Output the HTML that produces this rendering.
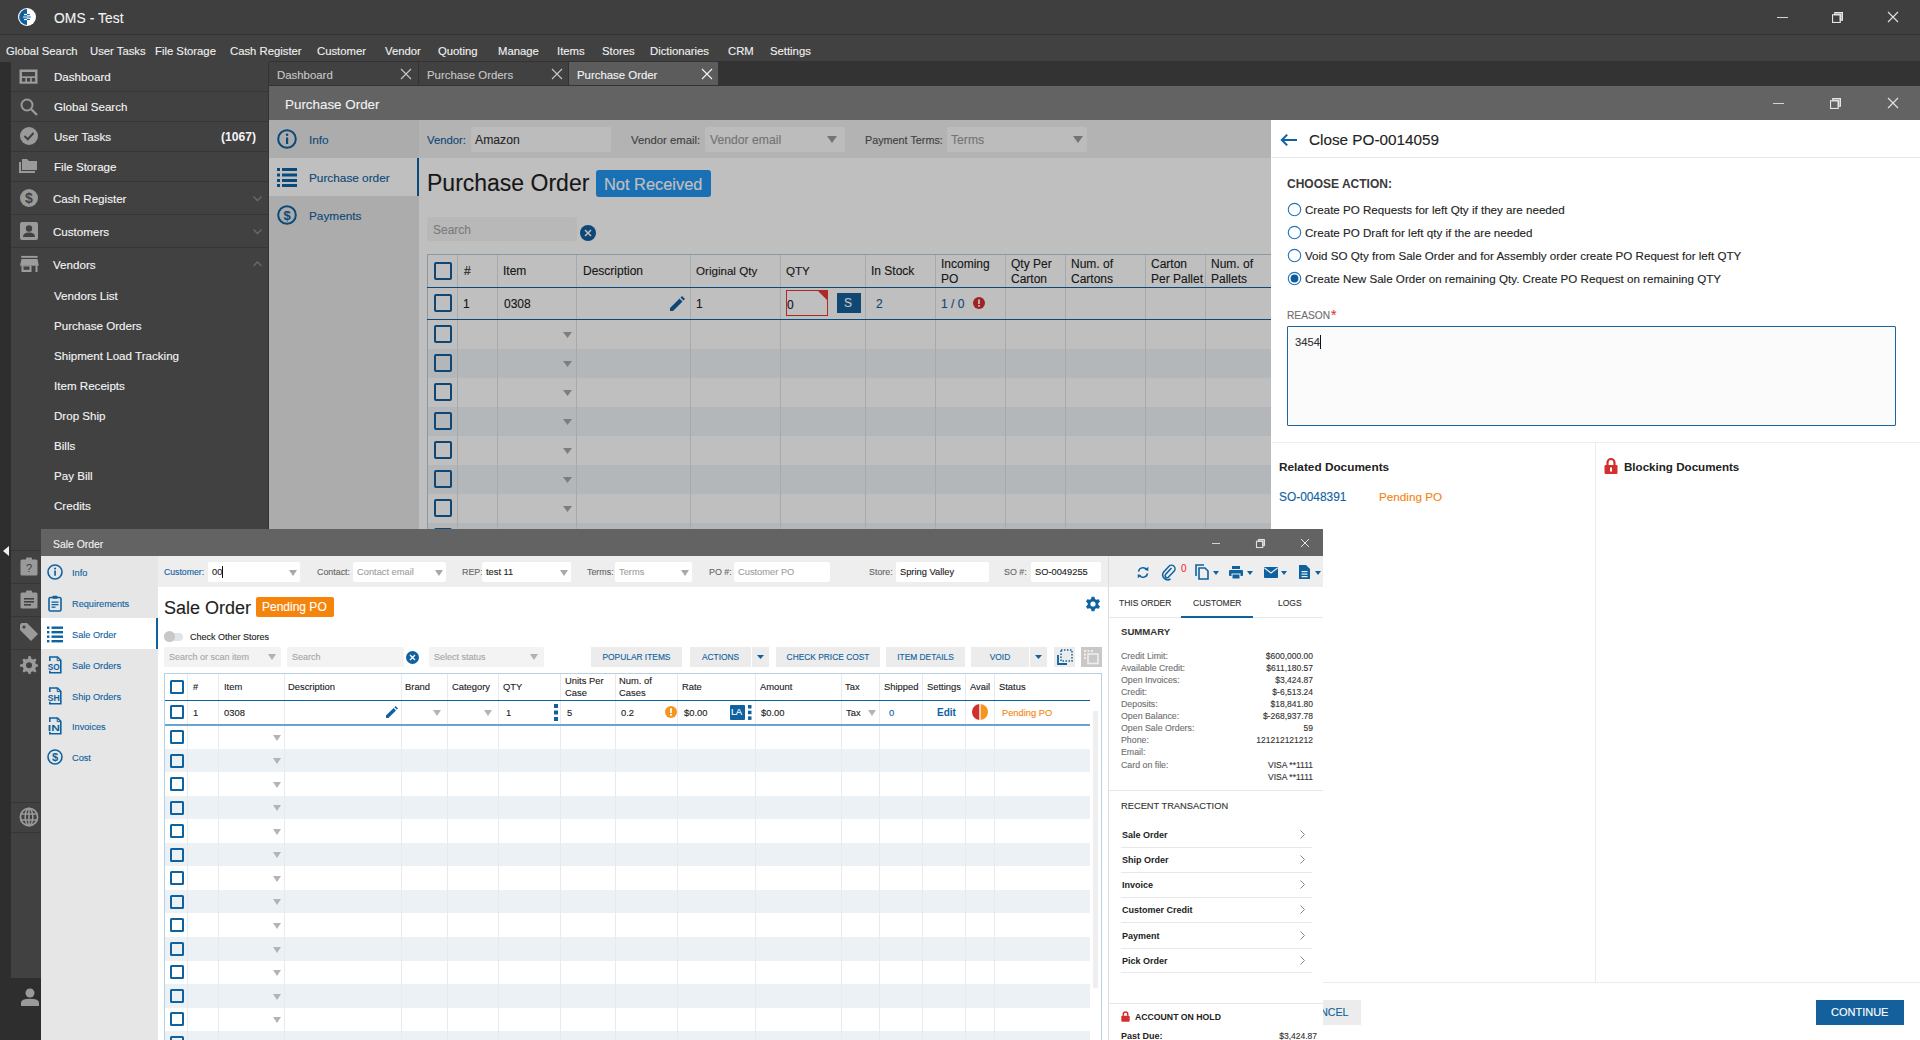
<!DOCTYPE html>
<html><head><meta charset="utf-8">
<style>
*{box-sizing:border-box;margin:0;padding:0}
html,body{width:1920px;height:1040px;overflow:hidden;background:#414141;font-family:"Liberation Sans",sans-serif}
.a{position:absolute}
.t{position:absolute;white-space:nowrap;line-height:16px;height:16px;-webkit-text-stroke:0.12px currentColor}
svg{position:absolute;overflow:visible}
.t[style*="bold"]{-webkit-text-stroke:0}
</style></head><body>

<!-- ===== APP TITLE BAR ===== -->
<div class="a" style="left:0;top:0;width:1920px;height:34px;background:#3f3f3f"></div>
<div class="a" style="left:0;top:34px;width:1920px;height:1px;background:#343434"></div>
<svg style="left:17px;top:7px" width="20" height="20" viewBox="0 0 20 20">
  <circle cx="10" cy="10" r="9" fill="#ffffff"/>
  <path d="M10 2.1 A7.9 7.9 0 0 0 10 17.9 Z" fill="#0e5f9e"/>
  <rect x="7" y="6.9" width="3" height="1.3" fill="#ffffff"/><rect x="10" y="6.9" width="3" height="1.3" rx="0.6" fill="#0e5f9e"/>
  <rect x="6" y="9.3" width="4" height="1.5" fill="#a9c8e2"/><rect x="10" y="9.3" width="4" height="1.5" rx="0.7" fill="#5b95c5"/>
  <rect x="7" y="11.8" width="3" height="1.3" fill="#ffffff"/><rect x="10" y="11.8" width="3" height="1.3" rx="0.6" fill="#0e5f9e"/>
</svg>
<div class="t" style="left:54px;top:11px;font-size:13.8px;color:#f2f2f2;letter-spacing:0.1px">OMS - Test</div>
<!-- window controls -->
<div class="a" style="left:1777px;top:16.5px;width:11px;height:1.3px;background:#d4d4d4"></div>
<svg style="left:1832px;top:12px" width="11" height="11" viewBox="0 0 10 10"><path d="M2.5 2.5 L2.5 0.5 L9.5 0.5 L9.5 7.5 L7.5 7.5 L7.5 2.5 Z" fill="#a9a9a9" stroke="#e6e6e6" stroke-width="1"/><rect x="0.5" y="2.5" width="7" height="7" fill="none" stroke="#e6e6e6" stroke-width="1"/></svg>
<svg style="left:1887.5px;top:12px" width="10" height="10"><path d="M0 0 L10 10 M10 0 L0 10" stroke="#e4e4e4" stroke-width="1.1"/></svg>

<!-- ===== MENU BAR ===== -->
<div class="a" style="left:0;top:35px;width:1920px;height:27px;background:#414141"></div>
<div style="position:absolute;left:0;top:42.5px;font-size:11.3px;color:#f0f0f0;line-height:16px;white-space:nowrap">
<span class="t" style="left:6px">Global Search</span>
<span class="t" style="left:90px">User Tasks</span>
<span class="t" style="left:155px">File Storage</span>
<span class="t" style="left:230px">Cash Register</span>
<span class="t" style="left:317px">Customer</span>
<span class="t" style="left:385px">Vendor</span>
<span class="t" style="left:438px">Quoting</span>
<span class="t" style="left:498px">Manage</span>
<span class="t" style="left:557px">Items</span>
<span class="t" style="left:602px">Stores</span>
<span class="t" style="left:650px">Dictionaries</span>
<span class="t" style="left:728px">CRM</span>
<span class="t" style="left:770px">Settings</span>
</div>

<!-- ===== SIDEBAR ===== -->
<div class="a" style="left:0;top:62px;width:11px;height:978px;background:#2e2e2e"></div>
<div class="a" style="left:11px;top:62px;width:258px;height:978px;background:#414141"></div>
<div class="a" style="left:268px;top:62px;width:1px;height:470px;background:#333"></div>
<!-- row separators -->
<div class="a" style="left:11px;top:91px;width:257px;height:1px;background:#363636"></div>
<div class="a" style="left:11px;top:121px;width:257px;height:1px;background:#363636"></div>
<div class="a" style="left:11px;top:151px;width:257px;height:1px;background:#363636"></div>
<div class="a" style="left:11px;top:181px;width:257px;height:1px;background:#363636"></div>
<div class="a" style="left:11px;top:214px;width:257px;height:1px;background:#363636"></div>
<div class="a" style="left:11px;top:247px;width:257px;height:1px;background:#363636"></div>
<div style="position:absolute;left:0;top:0.5px;font-size:11.6px;color:#f4f4f4">
<span class="t" style="left:54px;top:68px">Dashboard</span>
<span class="t" style="left:54px;top:98px">Global Search</span>
<span class="t" style="left:54px;top:128px">User Tasks</span>
<span class="t" style="left:221px;top:128px;font-weight:bold;font-size:12.1px">(1067)</span>
<span class="t" style="left:54px;top:158px">File Storage</span>
<span class="t" style="left:53px;top:190px">Cash Register</span>
<span class="t" style="left:53px;top:223px">Customers</span>
<span class="t" style="left:53px;top:256px">Vendors</span>
<span class="t" style="left:54px;top:287px">Vendors List</span>
<span class="t" style="left:54px;top:317px">Purchase Orders</span>
<span class="t" style="left:54px;top:347px">Shipment Load Tracking</span>
<span class="t" style="left:54px;top:377px">Item Receipts</span>
<span class="t" style="left:54px;top:407px">Drop Ship</span>
<span class="t" style="left:54px;top:437px">Bills</span>
<span class="t" style="left:54px;top:467px">Pay Bill</span>
<span class="t" style="left:54px;top:497px">Credits</span>
</div>
<!-- sidebar icons -->
<svg style="left:19px;top:69px" width="19" height="15" viewBox="0 0 19 15"><rect x="0.5" y="0.5" width="18" height="14.2" fill="#9d9d9d"/><rect x="3" y="3" width="13" height="4.3" fill="#414141"/><rect x="3" y="9" width="3.3" height="3.6" fill="#414141"/><rect x="7.9" y="9" width="3.3" height="3.6" fill="#414141"/><rect x="12.8" y="9" width="3.3" height="3.6" fill="#414141"/></svg>
<svg style="left:20px;top:98px" width="18" height="18" viewBox="0 0 18 18"><circle cx="7" cy="7" r="5.5" fill="none" stroke="#9a9a9a" stroke-width="2"/><path d="M11 11 L17 17" stroke="#9a9a9a" stroke-width="2.4"/></svg>
<svg style="left:20px;top:127px" width="18" height="18" viewBox="0 0 18 18"><circle cx="9" cy="9" r="9" fill="#9a9a9a"/><path d="M4.5 9 L7.8 12.2 L13.5 6" fill="none" stroke="#414141" stroke-width="2"/></svg>
<svg style="left:19px;top:158px" width="19" height="16" viewBox="0 0 19 16"><path d="M0 4 L0 15 L16 15 L16 13 L2 13 L2 4 Z" fill="#9a9a9a"/><path d="M3 1 L8 1 L10 3 L18 3 L18 12 L3 12 Z" fill="#9a9a9a"/></svg>
<svg style="left:20px;top:189px" width="18" height="18" viewBox="0 0 18 18"><circle cx="9" cy="9" r="9" fill="#9a9a9a"/><text x="9" y="14" font-size="14" font-family="Liberation Sans" font-weight="bold" text-anchor="middle" fill="#414141">$</text></svg>
<svg style="left:20px;top:222px" width="18" height="18" viewBox="0 0 18 18"><rect x="0" y="0" width="18" height="18" rx="2" fill="#9a9a9a"/><circle cx="9" cy="6.5" r="3.2" fill="#414141"/><path d="M3 15 Q3 10.5 9 10.5 Q15 10.5 15 15 Z" fill="#414141"/></svg>
<svg style="left:19px;top:255px" width="20" height="18" viewBox="0 0 20 18"><rect x="2.2" y="0.9" width="16.4" height="1.9" fill="#9d9d9d"/><path d="M2.5 4 L18.5 4 L19.8 10.7 L1 10.7 Z" fill="#9d9d9d"/><rect x="2.5" y="10.7" width="10" height="6.3" fill="#9d9d9d"/><rect x="4.5" y="11.5" width="6" height="3.3" fill="#414141"/><rect x="16.5" y="10.7" width="2" height="6.3" fill="#9d9d9d"/></svg>
<!-- chevrons -->
<svg style="left:253px;top:196px" width="9" height="6"><path d="M0.5 0.5 L4.5 4.5 L8.5 0.5" fill="none" stroke="#6a6a6a" stroke-width="1.3"/></svg>
<svg style="left:253px;top:229px" width="9" height="6"><path d="M0.5 0.5 L4.5 4.5 L8.5 0.5" fill="none" stroke="#6a6a6a" stroke-width="1.3"/></svg>
<svg style="left:253px;top:261px" width="9" height="6"><path d="M0.5 5 L4.5 1 L8.5 5" fill="none" stroke="#6a6a6a" stroke-width="1.3"/></svg>

<!-- ===== TAB STRIP ===== -->
<div class="a" style="left:269px;top:61px;width:1651px;height:25px;background:#333333"></div>
<div class="a" style="left:269px;top:62px;width:149px;height:23px;background:#414141"></div>
<div class="a" style="left:419px;top:62px;width:149px;height:23px;background:#414141"></div>
<div class="a" style="left:569px;top:62px;width:149px;height:23px;background:#5c5c5c"></div>
<div style="position:absolute;left:0;top:0;font-size:11.4px">
<span class="t" style="left:277px;top:67px;color:#c8c8c8">Dashboard</span>
<span class="t" style="left:427px;top:67px;color:#c8c8c8">Purchase Orders</span>
<span class="t" style="left:577px;top:67px;color:#f4f4f4">Purchase Order</span>
</div>
<svg style="left:401px;top:69px" width="10" height="10"><path d="M0 0 L10 10 M10 0 L0 10" stroke="#c8c8c8" stroke-width="1.1"/></svg>
<svg style="left:552px;top:69px" width="10" height="10"><path d="M0 0 L10 10 M10 0 L0 10" stroke="#c8c8c8" stroke-width="1.1"/></svg>
<svg style="left:702px;top:69px" width="10" height="10"><path d="M0 0 L10 10 M10 0 L0 10" stroke="#f4f4f4" stroke-width="1.1"/></svg>

<!-- ===== PO WINDOW ===== -->
<div class="a" style="left:269px;top:86px;width:1651px;height:34px;background:#636363"></div>
<div class="t" style="left:285px;top:97px;font-size:13.4px;color:#f2f2f2">Purchase Order</div>
<div class="a" style="left:1773px;top:102.5px;width:11px;height:1.3px;background:#d4d4d4"></div>
<svg style="left:1830px;top:98px" width="11" height="11" viewBox="0 0 10 10"><path d="M2.5 2.5 L2.5 0.5 L9.5 0.5 L9.5 7.5 L7.5 7.5 L7.5 2.5 Z" fill="#a9a9a9" stroke="#e6e6e6" stroke-width="1"/><rect x="0.5" y="2.5" width="7" height="7" fill="none" stroke="#e6e6e6" stroke-width="1"/></svg>
<svg style="left:1887.5px;top:98px" width="10" height="10"><path d="M0 0 L10 10 M10 0 L0 10" stroke="#e4e4e4" stroke-width="1.1"/></svg>

<div class="a" style="left:269px;top:120px;width:1002px;height:920px;background:#ffffff"></div>
<!-- left nav -->
<div class="a" style="left:269px;top:120px;width:150px;height:920px;background:#e6e6e6"></div>
<div class="a" style="left:269px;top:158px;width:150px;height:38px;background:#ffffff"></div>
<div class="a" style="left:417px;top:158px;width:2px;height:38px;background:#0f62a0"></div>
<svg style="left:277px;top:129px" width="20" height="20" viewBox="0 0 20 20"><circle cx="10" cy="10" r="8.8" fill="none" stroke="#0f62a0" stroke-width="2"/><rect x="9" y="8.5" width="2.2" height="6.5" fill="#0f62a0"/><circle cx="10.1" cy="5.8" r="1.3" fill="#0f62a0"/></svg>
<svg style="left:277px;top:167px" width="20" height="20" viewBox="0 0 20 20"><rect x="0" y="1" width="3" height="3" fill="#0f62a0"/><rect x="5" y="1" width="15" height="3" fill="#0f62a0"/><rect x="0" y="6.5" width="3" height="3" fill="#0f62a0"/><rect x="5" y="6.5" width="15" height="3" fill="#0f62a0"/><rect x="0" y="12" width="3" height="3" fill="#0f62a0"/><rect x="5" y="12" width="15" height="3" fill="#0f62a0"/><rect x="0" y="17" width="3" height="3" fill="#0f62a0"/><rect x="5" y="17" width="15" height="3" fill="#0f62a0"/></svg>
<svg style="left:277px;top:205px" width="20" height="20" viewBox="0 0 20 20"><circle cx="10" cy="10" r="8.8" fill="none" stroke="#0f62a0" stroke-width="2"/><text x="10" y="15" font-size="13" font-family="Liberation Sans" text-anchor="middle" fill="#0f62a0" font-weight="bold">$</text></svg>
<div style="position:absolute;left:0;top:0;font-size:11.8px;color:#0f62a0">
<span class="t" style="left:309px;top:132px">Info</span>
<span class="t" style="left:309px;top:170px">Purchase order</span>
<span class="t" style="left:309px;top:208px">Payments</span>
</div>
<!-- header bar -->
<div class="a" style="left:419px;top:120px;width:852px;height:38px;background:#efefef"></div>
<div style="position:absolute;left:0;top:0;font-size:11.3px">
<span class="t" style="left:427px;top:132px;color:#0f62a0">Vendor:</span>
<span class="t" style="left:631px;top:132px;color:#555">Vendor email:</span>
<span class="t" style="left:865px;top:132px;color:#555;font-size:10.8px">Payment Terms:</span>
</div>
<div class="a" style="left:471px;top:127px;width:140px;height:25px;background:#fbfbfb;border-radius:2px"></div>
<div class="a" style="left:705px;top:127px;width:140px;height:25px;background:#fbfbfb;border-radius:2px"></div>
<div class="a" style="left:947px;top:127px;width:140px;height:25px;background:#fbfbfb;border-radius:2px"></div>
<div style="position:absolute;left:0;top:0;font-size:12.2px">
<span class="t" style="left:475px;top:132px;color:#333">Amazon</span>
<span class="t" style="left:710px;top:132px;color:#9a9a9a">Vendor email</span>
<span class="t" style="left:951px;top:132px;color:#9a9a9a">Terms</span>
</div>
<svg style="left:827px;top:136px" width="10" height="7"><path d="M0 0 L10 0 L5 7 Z" fill="#9a9a9a"/></svg>
<svg style="left:1073px;top:136px" width="10" height="7"><path d="M0 0 L10 0 L5 7 Z" fill="#9a9a9a"/></svg>
<!-- heading -->
<div class="t" style="left:427px;top:171px;font-size:23px;line-height:24px;height:24px;color:#1e1e1e">Purchase Order</div>
<div class="a" style="left:596px;top:170px;width:115px;height:27px;background:#2296f0;border-radius:3px"></div>
<div class="t" style="left:604px;top:175px;font-size:16.4px;line-height:18px;height:18px;color:#fff">Not Received</div>
<!-- search -->
<div class="a" style="left:427px;top:217px;width:150px;height:24px;background:#f6f6f6;border-radius:2px"></div>
<div class="t" style="left:433px;top:222px;font-size:12px;color:#a6a6a6">Search</div>
<svg style="left:580px;top:225px" width="16" height="16" viewBox="0 0 16 16"><circle cx="8" cy="8" r="8" fill="#135f9c"/><path d="M5 5 L11 11 M11 5 L5 11" stroke="#fff" stroke-width="1.6"/></svg>
<!-- table -->
<div class="a" style="left:427px;top:254px;width:844px;height:786px;border-left:1px solid #b9cbd9;border-top:1px solid #b9cbd9"></div>
<div class="a" style="left:428px;top:349px;width:843px;height:29px;background:#f0f4f7"></div>
<div class="a" style="left:428px;top:407px;width:843px;height:29px;background:#f0f4f7"></div>
<div class="a" style="left:428px;top:465px;width:843px;height:29px;background:#f0f4f7"></div>
<div class="a" style="left:428px;top:523px;width:843px;height:29px;background:#f0f4f7"></div>
<!-- col lines -->
<div class="a" style="left:457px;top:255px;width:1px;height:785px;background:#dfe3e6"></div>
<div class="a" style="left:497px;top:255px;width:1px;height:785px;background:#dfe3e6"></div>
<div class="a" style="left:576px;top:255px;width:1px;height:785px;background:#dfe3e6"></div>
<div class="a" style="left:690px;top:255px;width:1px;height:785px;background:#dfe3e6"></div>
<div class="a" style="left:780px;top:255px;width:1px;height:785px;background:#dfe3e6"></div>
<div class="a" style="left:865px;top:255px;width:1px;height:785px;background:#dfe3e6"></div>
<div class="a" style="left:935px;top:255px;width:1px;height:785px;background:#dfe3e6"></div>
<div class="a" style="left:1005px;top:255px;width:1px;height:785px;background:#dfe3e6"></div>
<div class="a" style="left:1065px;top:255px;width:1px;height:785px;background:#dfe3e6"></div>
<div class="a" style="left:1145px;top:255px;width:1px;height:785px;background:#dfe3e6"></div>
<div class="a" style="left:1205px;top:255px;width:1px;height:785px;background:#dfe3e6"></div>
<div class="a" style="left:427px;top:286.5px;width:844px;height:1.5px;background:#0f62a0"></div>
<div class="a" style="left:427px;top:318.5px;width:844px;height:1.5px;background:#0f62a0"></div>
<div style="position:absolute;left:0;top:0;font-size:12px;color:#222">
<span class="t" style="left:464px;top:263px">#</span>
<span class="t" style="left:503px;top:263px">Item</span>
<span class="t" style="left:583px;top:263px">Description</span>
<span class="t" style="left:696px;top:263px;font-size:11.6px">Original Qty</span>
<span class="t" style="left:786px;top:263px;font-size:11.6px">QTY</span>
<span class="t" style="left:871px;top:263px">In Stock</span>
<span class="t" style="left:941px;top:256px">Incoming</span>
<span class="t" style="left:941px;top:271px">PO</span>
<span class="t" style="left:1011px;top:256px">Qty Per</span>
<span class="t" style="left:1011px;top:271px">Carton</span>
<span class="t" style="left:1071px;top:256px">Num. of</span>
<span class="t" style="left:1071px;top:271px">Cartons</span>
<span class="t" style="left:1151px;top:256px">Carton</span>
<span class="t" style="left:1151px;top:271px">Per Pallet</span>
<span class="t" style="left:1211px;top:256px">Num. of</span>
<span class="t" style="left:1211px;top:271px">Pallets</span>
<span class="t" style="left:463px;top:296px">1</span>
<span class="t" style="left:504px;top:296px">0308</span>
<span class="t" style="left:696px;top:296px">1</span>

<span class="t" style="left:876px;top:296px;color:#0f62a0">2</span>
<span class="t" style="left:941px;top:296px;color:#0f62a0">1 / 0</span>
</div>
<!-- checkboxes -->
<div class="a" style="left:434px;top:262px;width:18px;height:18px;border:2px solid #135f9c;border-radius:2px"></div>
<div class="a" style="left:434px;top:294px;width:18px;height:18px;border:2px solid #135f9c;border-radius:2px"></div>
<div class="a" style="left:434px;top:325px;width:18px;height:18px;border:2px solid #135f9c;border-radius:2px"></div>
<div class="a" style="left:434px;top:354px;width:18px;height:18px;border:2px solid #135f9c;border-radius:2px"></div>
<div class="a" style="left:434px;top:383px;width:18px;height:18px;border:2px solid #135f9c;border-radius:2px"></div>
<div class="a" style="left:434px;top:412px;width:18px;height:18px;border:2px solid #135f9c;border-radius:2px"></div>
<div class="a" style="left:434px;top:441px;width:18px;height:18px;border:2px solid #135f9c;border-radius:2px"></div>
<div class="a" style="left:434px;top:470px;width:18px;height:18px;border:2px solid #135f9c;border-radius:2px"></div>
<div class="a" style="left:434px;top:499px;width:18px;height:18px;border:2px solid #135f9c;border-radius:2px"></div>
<div class="a" style="left:434px;top:528px;width:18px;height:18px;border:2px solid #135f9c;border-radius:2px"></div>
<!-- dropdown arrows -->
<svg style="left:563px;top:332px" width="9" height="6"><path d="M0 0 L9 0 L4.5 6 Z" fill="#a8a8a8"/></svg>
<svg style="left:563px;top:361px" width="9" height="6"><path d="M0 0 L9 0 L4.5 6 Z" fill="#a8a8a8"/></svg>
<svg style="left:563px;top:390px" width="9" height="6"><path d="M0 0 L9 0 L4.5 6 Z" fill="#a8a8a8"/></svg>
<svg style="left:563px;top:419px" width="9" height="6"><path d="M0 0 L9 0 L4.5 6 Z" fill="#a8a8a8"/></svg>
<svg style="left:563px;top:448px" width="9" height="6"><path d="M0 0 L9 0 L4.5 6 Z" fill="#a8a8a8"/></svg>
<svg style="left:563px;top:477px" width="9" height="6"><path d="M0 0 L9 0 L4.5 6 Z" fill="#a8a8a8"/></svg>
<svg style="left:563px;top:506px" width="9" height="6"><path d="M0 0 L9 0 L4.5 6 Z" fill="#a8a8a8"/></svg>
<!-- row1 widgets -->
<svg style="left:670px;top:296px" width="15" height="15" viewBox="0 0 15 15"><path d="M0 15 L0 12 L9.5 2.5 L12.5 5.5 L3 15 Z M10.5 1.5 L12 0 L15 3 L13.5 4.5 Z" fill="#135f9c"/></svg>
<div class="a" style="left:786px;top:290px;width:42px;height:26px;border:1px solid #e53935;background:#fff"></div>
<svg style="left:818px;top:291px" width="9" height="9"><path d="M0 0 L9 0 L9 9 Z" fill="#e53935"/></svg>
<div class="t" style="left:787px;top:297px;font-size:12px;color:#222">0</div>
<div class="a" style="left:837px;top:293px;width:24px;height:20px;background:#14609c"></div>
<div class="t" style="left:844px;top:295px;font-size:12px;color:#fff">S</div>
<svg style="left:973px;top:297px" width="12" height="12" viewBox="0 0 12 12"><circle cx="6" cy="6" r="6" fill="#d32f2f"/><rect x="5.1" y="2.4" width="1.8" height="4.6" fill="#fff"/><rect x="5.1" y="8" width="1.8" height="1.7" fill="#fff"/></svg>
<!-- overlay -->
<div class="a" style="left:269px;top:120px;width:1002px;height:920px;background:rgba(0,0,0,0.25)"></div>


<!-- ===== CLOSE PO PANEL ===== -->
<div class="a" style="left:1271px;top:120px;width:649px;height:920px;background:#ffffff"></div>
<svg style="left:1280px;top:133px" width="18" height="14" viewBox="0 0 18 14"><path d="M17 7 L1.8 7 M7.2 1.6 L1.8 7 L7.2 12.4" fill="none" stroke="#0f62a0" stroke-width="2"/></svg>
<div class="t" style="left:1309px;top:131px;font-size:15.3px;line-height:18px;height:18px;color:#222">Close PO-0014059</div>
<div class="a" style="left:1272px;top:157px;width:648px;height:1px;background:#e6e6e6"></div>
<div class="t" style="left:1287px;top:176px;font-size:12px;font-weight:bold;color:#3a3a3a">CHOOSE ACTION:</div>
<svg style="left:1287px;top:202px" width="15" height="15" viewBox="0 0 15 15"><circle cx="7.5" cy="7.5" r="6.2" fill="none" stroke="#2476bb" stroke-width="1.15"/></svg>
<svg style="left:1287px;top:225px" width="15" height="15" viewBox="0 0 15 15"><circle cx="7.5" cy="7.5" r="6.2" fill="none" stroke="#2476bb" stroke-width="1.15"/></svg>
<svg style="left:1287px;top:248px" width="15" height="15" viewBox="0 0 15 15"><circle cx="7.5" cy="7.5" r="6.2" fill="none" stroke="#2476bb" stroke-width="1.15"/></svg>
<svg style="left:1287px;top:271px" width="15" height="15" viewBox="0 0 15 15"><circle cx="7.5" cy="7.5" r="6.2" fill="none" stroke="#2476bb" stroke-width="1.15"/><circle cx="7.5" cy="7.5" r="3.9" fill="#0f5c9c"/></svg>
<div style="position:absolute;left:0;top:0;font-size:11.6px;color:#222">
<span class="t" style="left:1305px;top:202px">Create PO Requests for left Qty if they are needed</span>
<span class="t" style="left:1305px;top:225px">Create PO Draft for left qty if the are needed</span>
<span class="t" style="left:1305px;top:248px">Void SO Qty from Sale Order and for Assembly order create PO Request for left QTY</span>
<span class="t" style="left:1305px;top:271px">Create New Sale Order on remaining Qty. Create PO Request on remaining QTY</span>
</div>
<div class="t" style="left:1287px;top:308px;font-size:10.2px;color:#707070">REASON</div>
<div class="t" style="left:1331px;top:307px;font-size:14px;color:#e53935">*</div>
<div class="a" style="left:1287px;top:326px;width:609px;height:100px;border:1px solid #1d64a0;background:#fbfbfb;border-radius:1px"></div>
<div class="t" style="left:1295px;top:334px;font-size:11.2px;color:#333">3454</div>
<div class="a" style="left:1320px;top:335px;width:1px;height:14px;background:#111"></div>
<div class="a" style="left:1272px;top:442px;width:648px;height:1px;background:#ececec"></div>
<div class="a" style="left:1595px;top:443px;width:1px;height:539px;background:#ececec"></div>
<div class="a" style="left:1272px;top:982px;width:648px;height:1px;background:#ececec"></div>
<div class="t" style="left:1279px;top:459px;font-size:11.8px;font-weight:bold;color:#222">Related Documents</div>
<div class="t" style="left:1279px;top:489px;font-size:11.9px;color:#0f62a0">SO-0048391</div>
<div class="t" style="left:1379px;top:489px;font-size:11.7px;color:#f5840c">Pending PO</div>
<svg style="left:1604px;top:458px" width="14" height="16" viewBox="0 0 14 16"><path d="M3.5 7 L3.5 4.5 A3.5 3.5 0 0 1 10.5 4.5 L10.5 7" fill="none" stroke="#d32f2f" stroke-width="2.2"/><rect x="0.5" y="7" width="13" height="9" rx="1.2" fill="#d32f2f"/><rect x="6" y="9.5" width="2" height="4" fill="#fff"/></svg>
<div class="t" style="left:1624px;top:459px;font-size:11.6px;font-weight:bold;color:#222">Blocking Documents</div>
<div class="a" style="left:1287px;top:1000px;width:74px;height:25px;background:#ececec"></div>
<div class="t" style="left:1287px;width:74px;text-align:center;padding-left:6px;top:1004px;font-size:10.6px;color:#0f62a0">CANCEL</div>
<div class="a" style="left:1816px;top:1000px;width:88px;height:25px;background:#14609c"></div>
<div class="t" style="left:1831px;top:1004px;font-size:11px;color:#fff">CONTINUE</div>


<!-- SO_BEGIN -->
<!-- ===== SALE ORDER WINDOW ===== -->
<div class="a" style="left:11px;top:550px;width:30px;height:1px;background:#363636"></div>
<div class="a" style="left:11px;top:583px;width:30px;height:1px;background:#363636"></div>
<div class="a" style="left:11px;top:616px;width:30px;height:1px;background:#363636"></div>
<div class="a" style="left:11px;top:649px;width:30px;height:1px;background:#363636"></div>
<div class="a" style="left:11px;top:802px;width:30px;height:1px;background:#363636"></div>
<div class="a" style="left:11px;top:832px;width:30px;height:1px;background:#363636"></div>
<div class="a" style="left:11px;top:978px;width:30px;height:62px;background:#2e2e2e"></div>
<svg style="left:3px;top:546px" width="6" height="10"><path d="M6 0 L0 5 L6 10 Z" fill="#f0f0f0"/></svg>
<svg style="left:20px;top:557px" width="18" height="19" viewBox="0 0 18 19"><rect x="0.5" y="2.5" width="17" height="16" rx="1.5" fill="#9a9a9a"/><rect x="6" y="0.5" width="6" height="3" rx="1" fill="#9a9a9a"/><text x="9" y="15" font-size="11" font-family="Liberation Sans" text-anchor="middle" fill="#414141">?</text></svg>
<svg style="left:20px;top:590px" width="18" height="19" viewBox="0 0 18 19"><rect x="0.5" y="2.5" width="17" height="16" rx="1.5" fill="#9a9a9a"/><rect x="6" y="0.5" width="6" height="3" rx="1" fill="#9a9a9a"/><rect x="4" y="8" width="10" height="1.6" fill="#414141"/><rect x="4" y="11" width="10" height="1.6" fill="#414141"/><rect x="4" y="14" width="7" height="1.6" fill="#414141"/></svg>
<svg style="left:19px;top:622px" width="20" height="20" viewBox="0 0 20 20"><path d="M1 2.5 L1 8 L12 19 L19 12 L8 1 L2.5 1 Z" fill="#9a9a9a"/><circle cx="5" cy="5" r="1.6" fill="#414141"/></svg>
<svg style="left:20px;top:656px" width="18" height="18" viewBox="0 0 18 18"><path d="M9 0 L10.7 0.3 L11.2 2.6 L13.2 3.6 L15.3 2.4 L16.5 3.9 L15.2 6 L15.9 8 L18 8.5 L18 10.5 L15.9 11 L15.2 13 L16.5 15 L15 16.5 L13 15.3 L11 16.1 L10.6 18 L8.5 18 L8 15.9 L6 15.2 L3.9 16.5 L2.5 15 L3.6 13 L2.8 11 L0 10.5 L0 8.5 L2.6 8 L3.5 6 L2.3 3.9 L3.9 2.5 L6 3.6 L8 2.7 L8.5 0 Z" fill="#9a9a9a"/><circle cx="9" cy="9.2" r="3" fill="#414141"/></svg>
<svg style="left:19px;top:807px" width="20" height="20" viewBox="0 0 20 20"><circle cx="10" cy="10" r="8.6" fill="none" stroke="#9a9a9a" stroke-width="1.8"/><ellipse cx="10" cy="10" rx="3.8" ry="8.6" fill="none" stroke="#9a9a9a" stroke-width="1.6"/><path d="M1.5 7 L18.5 7 M1.5 13 L18.5 13 M10 1.5 L10 18.5" stroke="#9a9a9a" stroke-width="1.6"/></svg>
<svg style="left:21px;top:988px" width="18" height="18" viewBox="0 0 20 20"><circle cx="10" cy="5.5" r="5" fill="#9a9a9a"/><path d="M0 20 L0 16.5 Q0 12 10 12 Q20 12 20 16.5 L20 20 Z" fill="#9a9a9a"/></svg>
<div class="a" style="left:41px;top:529px;width:1282px;height:27px;background:#636363"></div>
<div class="t" style="left:53px;top:536.5px;font-size:10.4px;color:#f2f2f2">Sale Order</div>
<div class="a" style="left:1212px;top:542.5px;width:8px;height:1.3px;background:#d4d4d4"></div>
<svg style="left:1256px;top:539px" width="9" height="9" viewBox="0 0 10 10"><path d="M2.5 2.5 L2.5 0.5 L9.5 0.5 L9.5 7.5 L7.5 7.5 L7.5 2.5 Z" fill="#a9a9a9" stroke="#e6e6e6" stroke-width="1.1"/><rect x="0.5" y="2.5" width="7" height="7" fill="none" stroke="#e6e6e6" stroke-width="1.1"/></svg>
<svg style="left:1301px;top:539px" width="8" height="8"><path d="M0 0 L8 8 M8 0 L0 8" stroke="#e4e4e4" stroke-width="1"/></svg>
<div class="a" style="left:41px;top:556px;width:1282px;height:484px;background:#ffffff"></div>
<div class="a" style="left:41px;top:556px;width:117px;height:484px;background:#e6e6e6"></div>
<div class="a" style="left:41px;top:618px;width:117px;height:31px;background:#ffffff"></div>
<div class="a" style="left:156px;top:618px;width:2px;height:31px;background:#0f62a0"></div>
<div class="t" style="left:72px;top:565px;font-size:9.2px;color:#0f62a0">Info</div>
<div class="t" style="left:72px;top:596px;font-size:9.2px;color:#0f62a0">Requirements</div>
<div class="t" style="left:72px;top:627px;font-size:9.2px;color:#0f62a0">Sale Order</div>
<div class="t" style="left:72px;top:658px;font-size:9.2px;color:#0f62a0">Sale Orders</div>
<div class="t" style="left:72px;top:689px;font-size:9.2px;color:#0f62a0">Ship Orders</div>
<div class="t" style="left:72px;top:719px;font-size:9.2px;color:#0f62a0">Invoices</div>
<div class="t" style="left:72px;top:750px;font-size:9.2px;color:#0f62a0">Cost</div>
<svg style="left:47px;top:564px" width="16" height="16" viewBox="0 0 16 16"><circle cx="8" cy="8" r="7" fill="none" stroke="#0f62a0" stroke-width="1.6"/><rect x="7.2" y="6.5" width="1.7" height="5.2" fill="#0f62a0"/><circle cx="8.05" cy="4.5" r="1.05" fill="#0f62a0"/></svg>
<svg style="left:48px;top:595px" width="14" height="17" viewBox="0 0 14 17"><rect x="1" y="2.5" width="12" height="13.5" rx="1.5" fill="none" stroke="#0f62a0" stroke-width="1.6"/><rect x="4.5" y="0.8" width="5" height="3" rx="0.8" fill="#0f62a0"/><rect x="3.5" y="6.5" width="7" height="1.3" fill="#0f62a0"/><rect x="3.5" y="9" width="7" height="1.3" fill="#0f62a0"/><rect x="3.5" y="11.5" width="4" height="1.3" fill="#0f62a0"/></svg>
<svg style="left:47px;top:626px" width="16" height="16" viewBox="0 0 16 16"><rect x="0" y="0.5" width="2.4" height="2.4" fill="#0f62a0"/><rect x="4.5" y="0.5" width="11.5" height="2.4" fill="#0f62a0"/><rect x="0" y="5" width="2.4" height="2.4" fill="#0f62a0"/><rect x="4.5" y="5" width="11.5" height="2.4" fill="#0f62a0"/><rect x="0" y="9.5" width="2.4" height="2.4" fill="#0f62a0"/><rect x="4.5" y="9.5" width="11.5" height="2.4" fill="#0f62a0"/><rect x="0" y="14" width="2.4" height="2.4" fill="#0f62a0"/><rect x="4.5" y="14" width="11.5" height="2.4" fill="#0f62a0"/></svg>
<svg style="left:47px;top:656px" width="16" height="18" viewBox="0 0 16 18"><path d="M2.8 5 L2.8 1 L10.5 1 L13.8 4.3 L13.8 16.8 L2.8 16.8 L2.8 14.5" fill="none" stroke="#0f62a0" stroke-width="1.6"/><path d="M10.2 1 L10.2 4.6 L13.8 4.6" fill="none" stroke="#0f62a0" stroke-width="1"/><rect x="0.5" y="7" width="12.5" height="7.6" fill="#e6e6e6"/><text x="0.8" y="14.1" font-size="8.4" font-weight="bold" font-family="Liberation Sans" fill="#0f62a0" textLength="12" lengthAdjust="spacingAndGlyphs">SO</text></svg>
<svg style="left:47px;top:687px" width="16" height="18" viewBox="0 0 16 18"><path d="M2.8 5 L2.8 1 L10.5 1 L13.8 4.3 L13.8 16.8 L2.8 16.8 L2.8 14.5" fill="none" stroke="#0f62a0" stroke-width="1.6"/><path d="M10.2 1 L10.2 4.6 L13.8 4.6" fill="none" stroke="#0f62a0" stroke-width="1"/><rect x="0.5" y="7" width="12.5" height="7.6" fill="#e6e6e6"/><text x="0.8" y="14.1" font-size="8.4" font-weight="bold" font-family="Liberation Sans" fill="#0f62a0" textLength="12" lengthAdjust="spacingAndGlyphs">SH</text></svg>
<svg style="left:47px;top:717px" width="16" height="18" viewBox="0 0 16 18"><path d="M2.8 5 L2.8 1 L10.5 1 L13.8 4.3 L13.8 16.8 L2.8 16.8 L2.8 14.5" fill="none" stroke="#0f62a0" stroke-width="1.6"/><path d="M10.2 1 L10.2 4.6 L13.8 4.6" fill="none" stroke="#0f62a0" stroke-width="1"/><rect x="0.5" y="7" width="12.5" height="7.6" fill="#e6e6e6"/><text x="0.8" y="14.1" font-size="8.4" font-weight="bold" font-family="Liberation Sans" fill="#0f62a0" textLength="12" lengthAdjust="spacingAndGlyphs">IN</text></svg>
<svg style="left:47px;top:749px" width="16" height="16" viewBox="0 0 16 16"><circle cx="8" cy="8" r="7" fill="none" stroke="#0f62a0" stroke-width="1.6"/><text x="8" y="12.2" font-size="11" font-weight="bold" font-family="Liberation Sans" text-anchor="middle" fill="#0f62a0">$</text></svg>
<div class="a" style="left:158px;top:556px;width:951px;height:31px;background:#eeeeee"></div>
<div class="a" style="left:1109px;top:556px;width:214px;height:31px;background:#eeeeee"></div>
<div class="a" style="left:1108px;top:556px;width:1px;height:484px;background:#dcdcdc"></div>
<div class="t" style="left:164px;top:564px;font-size:8.7px;color:#0f62a0">Customer:</div>
<div class="a" style="left:208px;top:562px;width:92px;height:20px;background:#ffffff;border-radius:2px"></div>
<div class="t" style="left:212px;top:564px;font-size:9.3px;color:#222">00</div>
<svg style="left:289px;top:570px" width="8" height="6"><path d="M0 0 L8 0 L4 6 Z" fill="#a8a8a8"/></svg>
<div class="t" style="left:317px;top:564px;font-size:8.9px;color:#666">Contact:</div>
<div class="a" style="left:353px;top:562px;width:93px;height:20px;background:#ffffff;border-radius:2px"></div>
<div class="t" style="left:357px;top:564px;font-size:9.3px;color:#a0a0a0">Contact email</div>
<svg style="left:435px;top:570px" width="8" height="6"><path d="M0 0 L8 0 L4 6 Z" fill="#a8a8a8"/></svg>
<div class="t" style="left:462px;top:564px;font-size:8.9px;color:#666">REP:</div>
<div class="a" style="left:482px;top:562px;width:89px;height:20px;background:#ffffff;border-radius:2px"></div>
<div class="t" style="left:486px;top:564px;font-size:9.3px;color:#222">test 11</div>
<svg style="left:560px;top:570px" width="8" height="6"><path d="M0 0 L8 0 L4 6 Z" fill="#a8a8a8"/></svg>
<div class="t" style="left:587px;top:564px;font-size:8.9px;color:#666">Terms:</div>
<div class="a" style="left:615px;top:562px;width:77px;height:20px;background:#ffffff;border-radius:2px"></div>
<div class="t" style="left:619px;top:564px;font-size:9.3px;color:#a0a0a0">Terms</div>
<svg style="left:681px;top:570px" width="8" height="6"><path d="M0 0 L8 0 L4 6 Z" fill="#a8a8a8"/></svg>
<div class="t" style="left:709px;top:564px;font-size:8.9px;color:#666">PO #:</div>
<div class="a" style="left:734px;top:562px;width:96px;height:20px;background:#ffffff;border-radius:2px"></div>
<div class="t" style="left:738px;top:564px;font-size:9.3px;color:#a0a0a0">Customer PO</div>
<div class="t" style="left:869px;top:564px;font-size:8.9px;color:#666">Store:</div>
<div class="a" style="left:896px;top:562px;width:93px;height:20px;background:#ffffff;border-radius:2px"></div>
<div class="t" style="left:900px;top:564px;font-size:9.3px;color:#222">Spring Valley</div>
<div class="t" style="left:1004px;top:564px;font-size:8.9px;color:#666">SO #:</div>
<div class="a" style="left:1031px;top:562px;width:70px;height:20px;background:#ffffff;border-radius:2px"></div>
<div class="t" style="left:1035px;top:564px;font-size:9.3px;color:#222">SO-0049255</div>
<div class="a" style="left:222px;top:566px;width:1px;height:12px;background:#111"></div>
<svg style="left:1136px;top:566px" width="14" height="13" viewBox="0 0 16 16"><path d="M2.5 7 A5.5 5.5 0 0 1 12.5 4.5" fill="none" stroke="#0f62a0" stroke-width="1.8"/><path d="M13.5 9 A5.5 5.5 0 0 1 3.5 11.5" fill="none" stroke="#0f62a0" stroke-width="1.8"/><path d="M10 4.5 L14.5 6 L14.5 1 Z" fill="#0f62a0"/><path d="M6 11.5 L1.5 10 L1.5 15 Z" fill="#0f62a0"/></svg>
<svg style="left:1162px;top:564px" width="14" height="16" viewBox="0 0 14 16"><path d="M9.5 4 L3.5 10.5 A2 2 0 0 0 6.3 13.3 L12 7.2 A3.5 3.5 0 0 0 7 2.2 L1.5 8.2 A5 5 0 0 0 8.5 15" fill="none" stroke="#0f62a0" stroke-width="1.5"/></svg>
<div class="t" style="left:1181px;top:561px;font-size:10px;color:#ff2a2a">0</div>
<svg style="left:1195px;top:564px" width="14" height="16" viewBox="0 0 14 16"><path d="M4 4 L4 15 L13 15 L13 7 L10 4 Z" fill="none" stroke="#0f62a0" stroke-width="1.6"/><path d="M1 12 L1 1 L9 1" fill="none" stroke="#0f62a0" stroke-width="1.6"/></svg>
<svg style="left:1229px;top:566px" width="14" height="13" viewBox="0 0 14 13"><rect x="3" y="0" width="8" height="3" fill="#0f62a0"/><rect x="0" y="4" width="14" height="6" rx="1" fill="#0f62a0"/><rect x="3" y="8" width="8" height="5" fill="#0f62a0" stroke="#eee" stroke-width="1"/></svg>
<svg style="left:1264px;top:567px" width="14" height="11" viewBox="0 0 14 11"><rect x="0" y="0" width="14" height="11" rx="1" fill="#0f62a0"/><path d="M0.5 1 L7 6 L13.5 1" fill="none" stroke="#eee" stroke-width="1.2"/></svg>
<svg style="left:1299px;top:565px" width="11" height="14" viewBox="0 0 11 14"><path d="M0 0 L7 0 L11 4 L11 14 L0 14 Z" fill="#0f62a0"/><rect x="2.5" y="6" width="6" height="1.2" fill="#eee"/><rect x="2.5" y="8.5" width="6" height="1.2" fill="#eee"/><rect x="2.5" y="11" width="6" height="1.2" fill="#eee"/></svg>
<svg style="left:1213px;top:571px" width="6" height="4"><path d="M0 0 L6 0 L3 4 Z" fill="#0f62a0"/></svg>
<svg style="left:1247px;top:571px" width="6" height="4"><path d="M0 0 L6 0 L3 4 Z" fill="#0f62a0"/></svg>
<svg style="left:1281px;top:571px" width="6" height="4"><path d="M0 0 L6 0 L3 4 Z" fill="#0f62a0"/></svg>
<svg style="left:1315px;top:571px" width="6" height="4"><path d="M0 0 L6 0 L3 4 Z" fill="#0f62a0"/></svg>
<div class="t" style="left:164px;top:598px;font-size:18px;line-height:20px;height:20px;color:#1e1e1e">Sale Order</div>
<div class="a" style="left:256px;top:597px;width:78px;height:20px;background:#f5840c;border-radius:2px"></div>
<div class="t" style="left:262px;top:599px;font-size:12px;color:#fff">Pending PO</div>
<svg style="left:1084.6px;top:595.5px" width="16" height="16" viewBox="0 0 16 16"><path fill-rule="evenodd" d="M6.01 3.09 L6.59 0.74 L9.41 0.74 L9.99 3.09 L11.26 3.82 L13.58 3.15 L15.00 5.59 L13.25 7.26 L13.25 8.74 L15.00 10.41 L13.58 12.85 L11.26 12.18 L9.99 12.91 L9.41 15.26 L6.59 15.26 L6.01 12.91 L4.74 12.18 L2.42 12.85 L1.00 10.41 L2.75 8.74 L2.75 7.26 L1.00 5.59 L2.42 3.15 L4.74 3.82 Z M10.6 8 A2.6 2.6 0 1 0 5.4 8 A2.6 2.6 0 1 0 10.6 8 Z" fill="#0f62a0"/></svg>
<div class="a" style="left:164px;top:633px;width:19px;height:8px;background:#e4e4e4;border-radius:4px"></div>
<div class="a" style="left:164px;top:631px;width:11px;height:11px;background:#c8c8c8;border-radius:50%"></div>
<div class="t" style="left:190px;top:629px;font-size:9px;color:#222">Check Other Stores</div>
<div class="a" style="left:164px;top:647px;width:117px;height:20px;background:#f3f3f3;border-radius:2px"></div>
<div class="t" style="left:169px;top:649px;font-size:9px;color:#a6a6a6">Search or scan item</div>
<div class="a" style="left:287px;top:647px;width:117px;height:20px;background:#f3f3f3;border-radius:2px"></div>
<div class="t" style="left:292px;top:649px;font-size:9px;color:#a6a6a6">Search</div>
<div class="a" style="left:429px;top:647px;width:115px;height:20px;background:#f3f3f3;border-radius:2px"></div>
<div class="t" style="left:434px;top:649px;font-size:9px;color:#a6a6a6">Select status</div>
<svg style="left:268px;top:654px" width="8" height="6"><path d="M0 0 L8 0 L4 6 Z" fill="#b0b0b0"/></svg>
<svg style="left:530px;top:654px" width="8" height="6"><path d="M0 0 L8 0 L4 6 Z" fill="#b0b0b0"/></svg>
<svg style="left:406px;top:651px" width="13" height="13" viewBox="0 0 13 13"><circle cx="6.5" cy="6.5" r="6.5" fill="#0f62a0"/><path d="M4 4 L9 9 M9 4 L4 9" stroke="#fff" stroke-width="1.4"/></svg>
<div class="a" style="left:591px;top:647px;width:91px;height:20px;background:#ececec"></div>
<div class="t" style="left:591px;width:91px;text-align:center;top:649px;font-size:8.4px;color:#0f62a0">POPULAR ITEMS</div>
<div class="a" style="left:690px;top:647px;width:61px;height:20px;background:#ececec"></div>
<div class="t" style="left:690px;width:61px;text-align:center;top:649px;font-size:8.4px;color:#0f62a0">ACTIONS</div>
<div class="a" style="left:751px;top:647px;width:18px;height:20px;background:#ececec"></div>
<div class="a" style="left:776px;top:647px;width:104px;height:20px;background:#ececec"></div>
<div class="t" style="left:776px;width:104px;text-align:center;top:649px;font-size:8.4px;color:#0f62a0">CHECK PRICE COST</div>
<div class="a" style="left:886px;top:647px;width:79px;height:20px;background:#ececec"></div>
<div class="t" style="left:886px;width:79px;text-align:center;top:649px;font-size:8.4px;color:#0f62a0">ITEM DETAILS</div>
<div class="a" style="left:971px;top:647px;width:58px;height:20px;background:#ececec"></div>
<div class="t" style="left:971px;width:58px;text-align:center;top:649px;font-size:8.4px;color:#0f62a0">VOID</div>
<div class="a" style="left:1029px;top:647px;width:18px;height:20px;background:#ececec"></div>
<div class="a" style="left:751px;top:647px;width:1px;height:20px;background:#fff"></div>
<div class="a" style="left:1029px;top:647px;width:1px;height:20px;background:#fff"></div>
<svg style="left:757px;top:655px" width="7" height="4"><path d="M0 0 L7 0 L3.5 4 Z" fill="#0f62a0"/></svg>
<svg style="left:1035px;top:655px" width="7" height="4"><path d="M0 0 L7 0 L3.5 4 Z" fill="#0f62a0"/></svg>
<div class="a" style="left:1054px;top:647px;width:21px;height:20px;background:#ececec"></div>
<svg style="left:1057px;top:649px" width="16" height="16" viewBox="0 0 16 16"><path d="M1 6 L1 15 L10 15" fill="none" stroke="#0f62a0" stroke-width="1.8"/><rect x="4" y="1" width="11" height="11" fill="none" stroke="#0f62a0" stroke-width="1.5" stroke-dasharray="1.5 1.5"/></svg>
<div class="a" style="left:1081px;top:647px;width:21px;height:20px;background:#c8c8c8"></div>
<svg style="left:1084px;top:650px" width="15" height="14" viewBox="0 0 15 14"><rect x="0" y="0" width="2" height="2" fill="#eee"/><rect x="3.5" y="0" width="2" height="2" fill="#eee"/><rect x="7" y="0" width="2" height="2" fill="#eee"/><rect x="0" y="3.5" width="2" height="2" fill="#eee"/><rect x="0" y="7" width="2" height="2" fill="#eee"/><rect x="4" y="4" width="10" height="9.5" fill="none" stroke="#eee" stroke-width="1.6"/></svg>
<div class="a" style="left:164px;top:673px;width:938px;height:367px;border:1px solid #b9cfe2;border-bottom:none"></div>
<div class="a" style="left:165px;top:748.8px;width:925px;height:23.52px;background:#ebf1f5"></div>
<div class="a" style="left:165px;top:795.9px;width:925px;height:23.52px;background:#ebf1f5"></div>
<div class="a" style="left:165px;top:842.9px;width:925px;height:23.52px;background:#ebf1f5"></div>
<div class="a" style="left:165px;top:889.9px;width:925px;height:23.52px;background:#ebf1f5"></div>
<div class="a" style="left:165px;top:937.0px;width:925px;height:23.52px;background:#ebf1f5"></div>
<div class="a" style="left:165px;top:984.0px;width:925px;height:23.52px;background:#ebf1f5"></div>
<div class="a" style="left:165px;top:1031.1px;width:925px;height:23.52px;background:#ebf1f5"></div>
<div class="a" style="left:187px;top:674px;width:1px;height:366px;background:#e8ebee"></div>
<div class="a" style="left:218px;top:674px;width:1px;height:366px;background:#e8ebee"></div>
<div class="a" style="left:284px;top:674px;width:1px;height:366px;background:#e8ebee"></div>
<div class="a" style="left:401px;top:674px;width:1px;height:366px;background:#e8ebee"></div>
<div class="a" style="left:447px;top:674px;width:1px;height:366px;background:#e8ebee"></div>
<div class="a" style="left:498px;top:674px;width:1px;height:366px;background:#e8ebee"></div>
<div class="a" style="left:560px;top:674px;width:1px;height:366px;background:#e8ebee"></div>
<div class="a" style="left:615px;top:674px;width:1px;height:366px;background:#e8ebee"></div>
<div class="a" style="left:677px;top:674px;width:1px;height:366px;background:#e8ebee"></div>
<div class="a" style="left:755px;top:674px;width:1px;height:366px;background:#e8ebee"></div>
<div class="a" style="left:841px;top:674px;width:1px;height:366px;background:#e8ebee"></div>
<div class="a" style="left:879px;top:674px;width:1px;height:366px;background:#e8ebee"></div>
<div class="a" style="left:922px;top:674px;width:1px;height:366px;background:#e8ebee"></div>
<div class="a" style="left:965px;top:674px;width:1px;height:366px;background:#e8ebee"></div>
<div class="a" style="left:994px;top:674px;width:1px;height:366px;background:#e8ebee"></div>
<div class="a" style="left:165px;top:699.5px;width:925px;height:1.6px;background:#0f62a0"></div>
<div class="a" style="left:165px;top:724.3px;width:925px;height:1.3px;background:#6aa3d0"></div>
<div class="a" style="left:1093px;top:711px;width:5px;height:277px;background:#efefef"></div>
<div class="t" style="left:193px;top:679px;font-size:9.4px;color:#222">#</div>
<div class="t" style="left:224px;top:679px;font-size:9.4px;color:#222">Item</div>
<div class="t" style="left:288px;top:679px;font-size:9.4px;color:#222">Description</div>
<div class="t" style="left:405px;top:679px;font-size:9.4px;color:#222">Brand</div>
<div class="t" style="left:452px;top:679px;font-size:9.4px;color:#222">Category</div>
<div class="t" style="left:503px;top:679px;font-size:9.4px;color:#222">QTY</div>
<div class="t" style="left:682px;top:679px;font-size:9.4px;color:#222">Rate</div>
<div class="t" style="left:760px;top:679px;font-size:9.4px;color:#222">Amount</div>
<div class="t" style="left:845px;top:679px;font-size:9.4px;color:#222">Tax</div>
<div class="t" style="left:884px;top:679px;font-size:9.4px;color:#222">Shipped</div>
<div class="t" style="left:927px;top:679px;font-size:9.4px;color:#222">Settings</div>
<div class="t" style="left:970px;top:679px;font-size:9.4px;color:#222">Avail</div>
<div class="t" style="left:999px;top:679px;font-size:9.4px;color:#222">Status</div>
<div class="t" style="left:565px;top:673px;font-size:9.4px;color:#222">Units Per</div>
<div class="t" style="left:619px;top:673px;font-size:9.4px;color:#222">Num. of</div>
<div class="t" style="left:565px;top:685px;font-size:9.4px;color:#222">Case</div>
<div class="t" style="left:619px;top:685px;font-size:9.4px;color:#222">Cases</div>
<div class="a" style="left:169.5px;top:680.0px;width:14px;height:14px;border:2px solid #0f62a0;border-radius:1.5px"></div>
<div class="a" style="left:169.5px;top:705.0px;width:14px;height:14px;border:2px solid #0f62a0;border-radius:1.5px"></div>
<div class="a" style="left:169.5px;top:730.1px;width:14px;height:14px;border:2px solid #0f62a0;border-radius:1.5px"></div>
<div class="a" style="left:169.5px;top:753.6px;width:14px;height:14px;border:2px solid #0f62a0;border-radius:1.5px"></div>
<div class="a" style="left:169.5px;top:777.1px;width:14px;height:14px;border:2px solid #0f62a0;border-radius:1.5px"></div>
<div class="a" style="left:169.5px;top:800.7px;width:14px;height:14px;border:2px solid #0f62a0;border-radius:1.5px"></div>
<div class="a" style="left:169.5px;top:824.2px;width:14px;height:14px;border:2px solid #0f62a0;border-radius:1.5px"></div>
<div class="a" style="left:169.5px;top:847.7px;width:14px;height:14px;border:2px solid #0f62a0;border-radius:1.5px"></div>
<div class="a" style="left:169.5px;top:871.2px;width:14px;height:14px;border:2px solid #0f62a0;border-radius:1.5px"></div>
<div class="a" style="left:169.5px;top:894.7px;width:14px;height:14px;border:2px solid #0f62a0;border-radius:1.5px"></div>
<div class="a" style="left:169.5px;top:918.3px;width:14px;height:14px;border:2px solid #0f62a0;border-radius:1.5px"></div>
<div class="a" style="left:169.5px;top:941.8px;width:14px;height:14px;border:2px solid #0f62a0;border-radius:1.5px"></div>
<div class="a" style="left:169.5px;top:965.3px;width:14px;height:14px;border:2px solid #0f62a0;border-radius:1.5px"></div>
<div class="a" style="left:169.5px;top:988.8px;width:14px;height:14px;border:2px solid #0f62a0;border-radius:1.5px"></div>
<div class="a" style="left:169.5px;top:1012.3px;width:14px;height:14px;border:2px solid #0f62a0;border-radius:1.5px"></div>
<div class="a" style="left:169.5px;top:1035.9px;width:14px;height:14px;border:2px solid #0f62a0;border-radius:1.5px"></div>
<svg style="left:273px;top:734.8px" width="8" height="6"><path d="M0 0 L8 0 L4 6 Z" fill="#b4b4b4"/></svg>
<svg style="left:273px;top:758.3px" width="8" height="6"><path d="M0 0 L8 0 L4 6 Z" fill="#b4b4b4"/></svg>
<svg style="left:273px;top:781.8px" width="8" height="6"><path d="M0 0 L8 0 L4 6 Z" fill="#b4b4b4"/></svg>
<svg style="left:273px;top:805.4px" width="8" height="6"><path d="M0 0 L8 0 L4 6 Z" fill="#b4b4b4"/></svg>
<svg style="left:273px;top:828.9px" width="8" height="6"><path d="M0 0 L8 0 L4 6 Z" fill="#b4b4b4"/></svg>
<svg style="left:273px;top:852.4px" width="8" height="6"><path d="M0 0 L8 0 L4 6 Z" fill="#b4b4b4"/></svg>
<svg style="left:273px;top:875.9px" width="8" height="6"><path d="M0 0 L8 0 L4 6 Z" fill="#b4b4b4"/></svg>
<svg style="left:273px;top:899.4px" width="8" height="6"><path d="M0 0 L8 0 L4 6 Z" fill="#b4b4b4"/></svg>
<svg style="left:273px;top:923.0px" width="8" height="6"><path d="M0 0 L8 0 L4 6 Z" fill="#b4b4b4"/></svg>
<svg style="left:273px;top:946.5px" width="8" height="6"><path d="M0 0 L8 0 L4 6 Z" fill="#b4b4b4"/></svg>
<svg style="left:273px;top:970.0px" width="8" height="6"><path d="M0 0 L8 0 L4 6 Z" fill="#b4b4b4"/></svg>
<svg style="left:273px;top:993.5px" width="8" height="6"><path d="M0 0 L8 0 L4 6 Z" fill="#b4b4b4"/></svg>
<svg style="left:273px;top:1017.0px" width="8" height="6"><path d="M0 0 L8 0 L4 6 Z" fill="#b4b4b4"/></svg>
<svg style="left:273px;top:1040.6px" width="8" height="6"><path d="M0 0 L8 0 L4 6 Z" fill="#b4b4b4"/></svg>
<div class="t" style="left:193px;top:705px;font-size:9.4px;color:#222">1</div>
<div class="t" style="left:224px;top:705px;font-size:9.4px;color:#222">0308</div>
<div class="t" style="left:506px;top:705px;font-size:9.4px;color:#222">1</div>
<div class="t" style="left:567px;top:705px;font-size:9.4px;color:#222">5</div>
<div class="t" style="left:621px;top:705px;font-size:9.4px;color:#222">0.2</div>
<div class="t" style="left:684px;top:705px;font-size:9.4px;color:#222">$0.00</div>
<div class="t" style="left:761px;top:705px;font-size:9.4px;color:#222">$0.00</div>
<div class="t" style="left:846px;top:705px;font-size:9.4px;color:#222">Tax</div>
<div class="t" style="left:889px;top:705px;font-size:9.4px;color:#0f62a0">0</div>
<div class="t" style="left:937px;top:705px;font-size:10px;font-weight:bold;color:#0f62a0">Edit</div>
<div class="t" style="left:1002px;top:705px;font-size:9.3px;color:#f5840c">Pending PO</div>
<svg style="left:386px;top:706px" width="12" height="12" viewBox="0 0 15 15"><path d="M0 15 L0 12 L9.5 2.5 L12.5 5.5 L3 15 Z M10.5 1.5 L12 0 L15 3 L13.5 4.5 Z" fill="#0f62a0"/></svg>
<svg style="left:433px;top:710px" width="8" height="6"><path d="M0 0 L8 0 L4 6 Z" fill="#b4b4b4"/></svg>
<svg style="left:484px;top:710px" width="8" height="6"><path d="M0 0 L8 0 L4 6 Z" fill="#b4b4b4"/></svg>
<svg style="left:868px;top:710px" width="8" height="6"><path d="M0 0 L8 0 L4 6 Z" fill="#b4b4b4"/></svg>
<svg style="left:554px;top:704px" width="4" height="17"><rect x="0" y="0" width="4" height="4" fill="#0f62a0"/><rect x="0" y="6.5" width="4" height="4" fill="#0f62a0"/><rect x="0" y="13" width="4" height="4" fill="#0f62a0"/></svg>
<svg style="left:748px;top:705px" width="4" height="15"><rect x="0" y="0" width="3.5" height="3.5" fill="#0f62a0"/><rect x="0" y="5.7" width="3.5" height="3.5" fill="#0f62a0"/><rect x="0" y="11.4" width="3.5" height="3.5" fill="#0f62a0"/></svg>
<svg style="left:665px;top:706px" width="12" height="12" viewBox="0 0 12 12"><circle cx="6" cy="6" r="6" fill="#f7941d"/><rect x="5.1" y="2.3" width="1.8" height="4.7" fill="#fff"/><rect x="5.1" y="8" width="1.8" height="1.7" fill="#fff"/></svg>
<div class="a" style="left:730px;top:705px;width:15px;height:15px;background:#0f62a0;border-radius:1px"></div>
<div class="t" style="left:731px;top:704px;font-size:9.5px;color:#fff;letter-spacing:-0.5px">LA</div>
<svg style="left:972px;top:704px" width="16" height="16" viewBox="0 0 16 16"><path d="M7.3 0.03 A8 8 0 0 0 7.3 15.97 Z" fill="#d32f2f"/><path d="M8.7 0.03 A8 8 0 0 1 8.7 15.97 Z" fill="#f7941d"/></svg>
<div class="a" style="left:1109px;top:587px;width:214px;height:453px;background:#ffffff"></div>
<div class="a" style="left:1109px;top:617px;width:214px;height:1px;background:#e8e8e8"></div>
<div class="t" style="left:1119px;top:594.5px;font-size:8.5px;color:#333">THIS ORDER</div>
<div class="t" style="left:1193px;top:594.5px;font-size:8.5px;color:#333">CUSTOMER</div>
<div class="t" style="left:1278px;top:594.5px;font-size:8.5px;color:#333">LOGS</div>
<div class="a" style="left:1181px;top:616px;width:72px;height:2px;background:#0f62a0"></div>
<div class="t" style="left:1121px;top:624px;font-size:9.6px;font-weight:bold;color:#333">SUMMARY</div>
<div class="t" style="left:1121px;top:647.6px;font-size:8.8px;color:#707070">Credit Limit:</div>
<div class="t" style="left:1200px;width:113px;text-align:right;top:647.6px;font-size:8.5px;color:#333">$600,000.00</div>
<div class="t" style="left:1121px;top:659.7px;font-size:8.8px;color:#707070">Available Credit:</div>
<div class="t" style="left:1200px;width:113px;text-align:right;top:659.7px;font-size:8.5px;color:#333">$611,180.57</div>
<div class="t" style="left:1121px;top:671.8px;font-size:8.8px;color:#707070">Open Invoices:</div>
<div class="t" style="left:1200px;width:113px;text-align:right;top:671.8px;font-size:8.5px;color:#333">$3,424.87</div>
<div class="t" style="left:1121px;top:683.9px;font-size:8.8px;color:#707070">Credit:</div>
<div class="t" style="left:1200px;width:113px;text-align:right;top:683.9px;font-size:8.5px;color:#333">$-6,513.24</div>
<div class="t" style="left:1121px;top:696.0px;font-size:8.8px;color:#707070">Deposits:</div>
<div class="t" style="left:1200px;width:113px;text-align:right;top:696.0px;font-size:8.5px;color:#333">$18,841.80</div>
<div class="t" style="left:1121px;top:708.1px;font-size:8.8px;color:#707070">Open Balance:</div>
<div class="t" style="left:1200px;width:113px;text-align:right;top:708.1px;font-size:8.5px;color:#333">$-268,937.78</div>
<div class="t" style="left:1121px;top:720.2px;font-size:8.8px;color:#707070">Open Sale Orders:</div>
<div class="t" style="left:1200px;width:113px;text-align:right;top:720.2px;font-size:8.5px;color:#333">59</div>
<div class="t" style="left:1121px;top:732.3px;font-size:8.8px;color:#707070">Phone:</div>
<div class="t" style="left:1200px;width:113px;text-align:right;top:732.3px;font-size:8.5px;color:#333">121212121212</div>
<div class="t" style="left:1121px;top:744.4px;font-size:8.8px;color:#707070">Email:</div>
<div class="t" style="left:1121px;top:756.5px;font-size:8.8px;color:#707070">Card on file:</div>
<div class="t" style="left:1200px;width:113px;text-align:right;top:756.5px;font-size:8.5px;color:#333">VISA **1111</div>
<div class="t" style="left:1200px;width:113px;text-align:right;top:768.6px;font-size:8.5px;color:#333">VISA **1111</div>
<div class="a" style="left:1109px;top:790px;width:214px;height:1px;background:#e6e6e6"></div>
<div class="t" style="left:1121px;top:797.5px;font-size:9.3px;color:#333">RECENT TRANSACTION</div>
<div class="t" style="left:1122px;top:827px;font-size:9px;font-weight:bold;color:#222">Sale Order</div>
<svg style="left:1300px;top:830px" width="5" height="9"><path d="M0.5 0.5 L4.5 4.5 L0.5 8.5" fill="none" stroke="#888" stroke-width="1"/></svg>
<div class="a" style="left:1121px;top:846.7px;width:191px;height:1px;background:#e8e8e8"></div>
<div class="t" style="left:1122px;top:852px;font-size:9px;font-weight:bold;color:#222">Ship Order</div>
<svg style="left:1300px;top:855px" width="5" height="9"><path d="M0.5 0.5 L4.5 4.5 L0.5 8.5" fill="none" stroke="#888" stroke-width="1"/></svg>
<div class="a" style="left:1121px;top:872.0px;width:191px;height:1px;background:#e8e8e8"></div>
<div class="t" style="left:1122px;top:877px;font-size:9px;font-weight:bold;color:#222">Invoice</div>
<svg style="left:1300px;top:880px" width="5" height="9"><path d="M0.5 0.5 L4.5 4.5 L0.5 8.5" fill="none" stroke="#888" stroke-width="1"/></svg>
<div class="a" style="left:1121px;top:897.0px;width:191px;height:1px;background:#e8e8e8"></div>
<div class="t" style="left:1122px;top:902px;font-size:9px;font-weight:bold;color:#222">Customer Credit</div>
<svg style="left:1300px;top:905px" width="5" height="9"><path d="M0.5 0.5 L4.5 4.5 L0.5 8.5" fill="none" stroke="#888" stroke-width="1"/></svg>
<div class="a" style="left:1121px;top:922.0px;width:191px;height:1px;background:#e8e8e8"></div>
<div class="t" style="left:1122px;top:928px;font-size:9px;font-weight:bold;color:#222">Payment</div>
<svg style="left:1300px;top:931px" width="5" height="9"><path d="M0.5 0.5 L4.5 4.5 L0.5 8.5" fill="none" stroke="#888" stroke-width="1"/></svg>
<div class="a" style="left:1121px;top:947.5px;width:191px;height:1px;background:#e8e8e8"></div>
<div class="t" style="left:1122px;top:953px;font-size:9px;font-weight:bold;color:#222">Pick Order</div>
<svg style="left:1300px;top:956px" width="5" height="9"><path d="M0.5 0.5 L4.5 4.5 L0.5 8.5" fill="none" stroke="#888" stroke-width="1"/></svg>
<div class="a" style="left:1121px;top:972.0px;width:191px;height:1px;background:#e8e8e8"></div>
<div class="a" style="left:1109px;top:1003px;width:214px;height:1px;background:#e6e6e6"></div>
<svg style="left:1121px;top:1011px" width="9" height="11" viewBox="0 0 14 16"><path d="M3.5 7 L3.5 4.5 A3.5 3.5 0 0 1 10.5 4.5 L10.5 7" fill="none" stroke="#d32f2f" stroke-width="2.4"/><rect x="0.5" y="7" width="13" height="9" rx="1.2" fill="#d32f2f"/></svg>
<div class="t" style="left:1135px;top:1009px;font-size:8.7px;font-weight:bold;color:#222">ACCOUNT ON HOLD</div>
<div class="t" style="left:1121px;top:1028px;font-size:9px;font-weight:bold;color:#222">Past Due:</div>
<div class="t" style="left:1200px;width:117px;text-align:right;top:1028px;font-size:8.5px;color:#333">$3,424.87</div>
<!-- SO_END -->

</body></html>
